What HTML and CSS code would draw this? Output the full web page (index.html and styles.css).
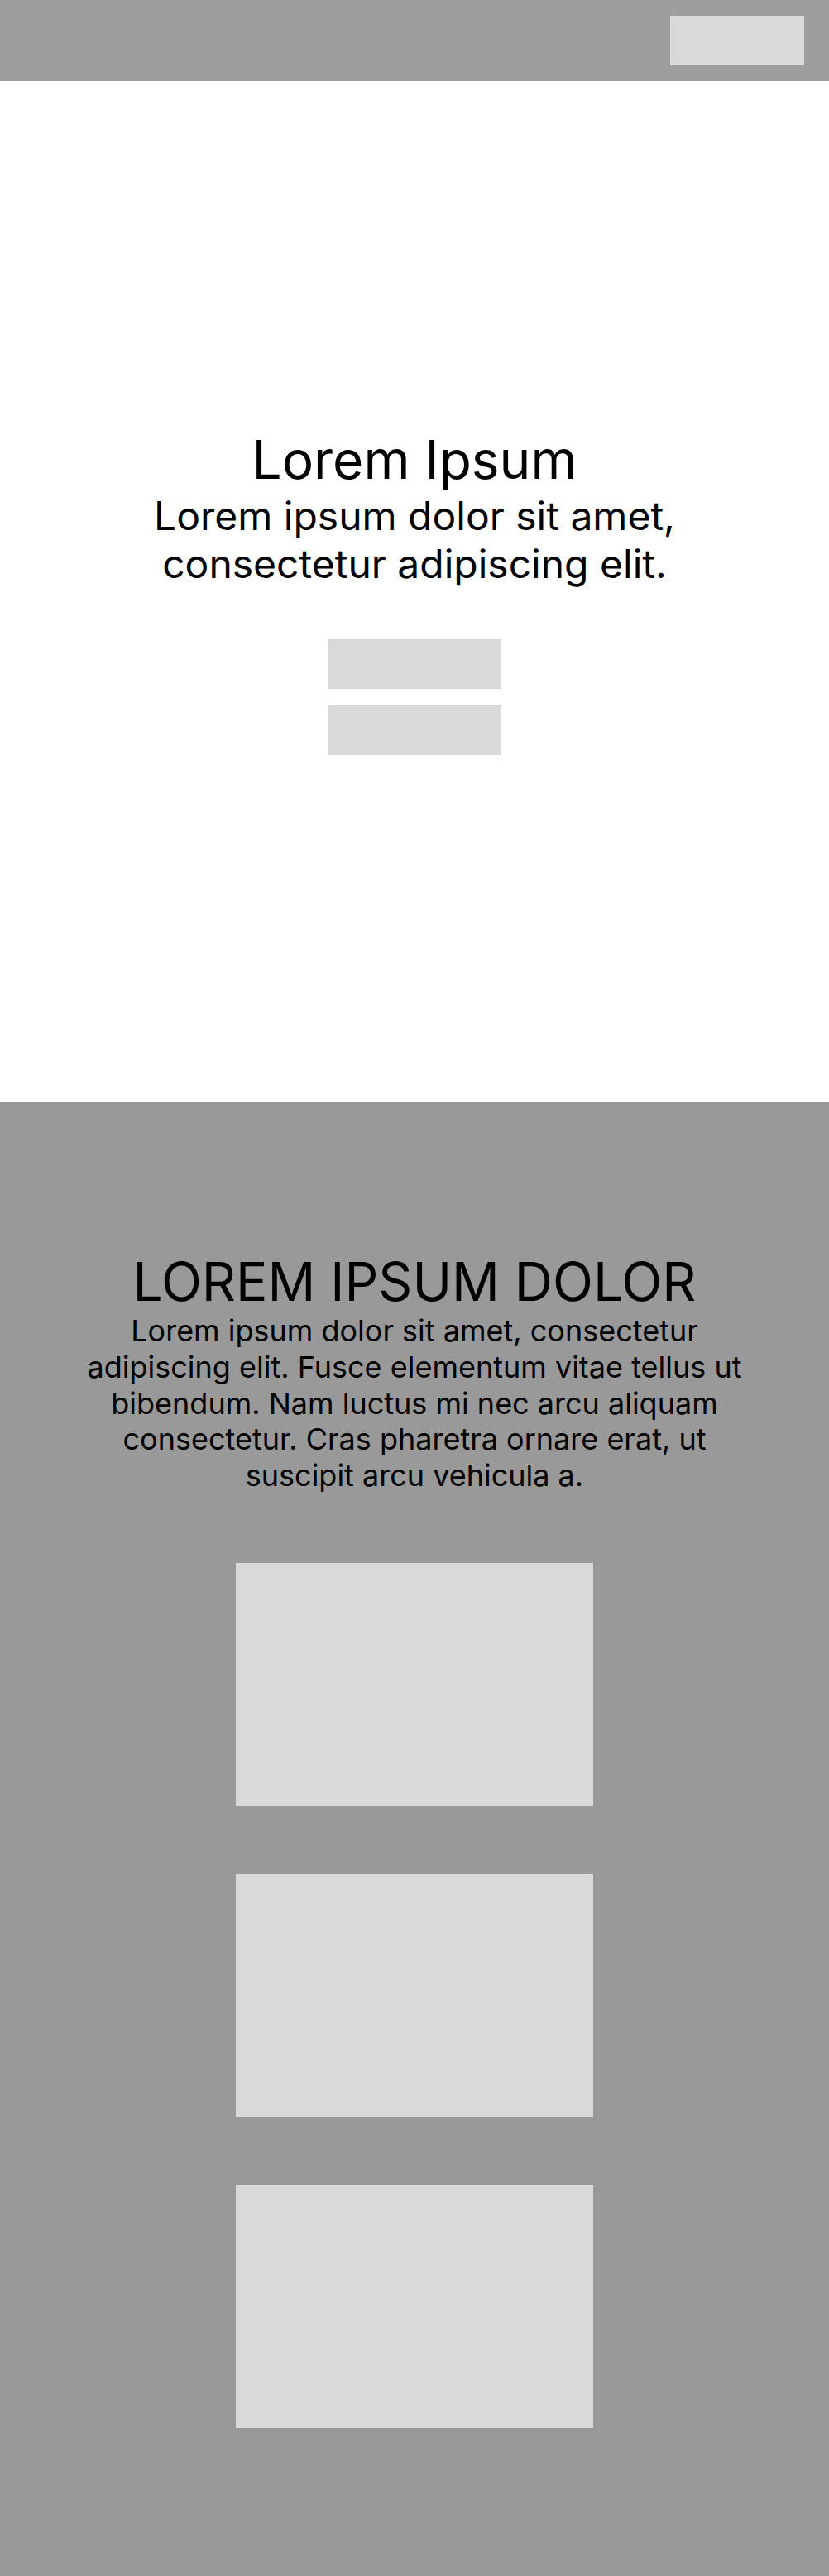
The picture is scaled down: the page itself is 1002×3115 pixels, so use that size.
FILE: index.html
```html
<!DOCTYPE html>
<html lang="en">
<head>
<meta charset="utf-8">
<title>Lorem Ipsum</title>
<link rel="stylesheet" href="styles.css">
</head>
<body>
<header class="topbar">
  <div class="topbar-button"></div>
</header>
<section class="hero">
  <h1 class="hero-title">Lorem Ipsum</h1>
  <p class="hero-subtitle">Lorem ipsum dolor sit amet, consectetur adipiscing elit.</p>
  <div class="hero-actions">
    <div class="hero-button"></div>
    <div class="hero-button"></div>
  </div>
</section>
<section class="features">
  <h2 class="features-title">LOREM IPSUM DOLOR</h2>
  <p class="features-text">Lorem ipsum dolor sit amet, consectetur adipiscing elit. Fusce elementum vitae tellus ut bibendum. Nam luctus mi nec arcu aliquam consectetur. Cras pharetra ornare erat, ut suscipit arcu vehicula a.</p>
  <div class="features-cards">
    <div class="card"></div>
    <div class="card"></div>
    <div class="card"></div>
  </div>
</section>
</body>
</html>
```
FILE: styles.css
```css
* {
  box-sizing: border-box;
}

html, body {
  margin: 0;
  padding: 0;
}

body {
  font-family: Inter, "Noto Sans", sans-serif;
  font-weight: 400;
  color: #000;
  background: #fff;
}

.topbar {
  height: 98px;
  background: #9e9e9e;
  display: flex;
  justify-content: flex-end;
  align-items: center;
  padding: 0 30px;
}

.topbar-button {
  width: 162px;
  height: 60px;
  background: #d9d9d9;
}

.hero {
  height: 1234px;
  display: flex;
  flex-direction: column;
  align-items: center;
  justify-content: center;
  text-align: center;
}

.hero-title {
  margin: 0;
  font-size: 64px;
  font-weight: 400;
  line-height: 1.21;
}

.hero-subtitle {
  margin: 0;
  max-width: 680px;
  font-size: 48px;
  line-height: 1.21;
}

.hero-actions {
  margin-top: 62px;
  display: flex;
  flex-direction: column;
  gap: 20px;
}

.hero-button {
  width: 210px;
  height: 60px;
  background: #d9d9d9;
}

.features {
  background: #999999;
  padding: 179px 0;
  display: flex;
  flex-direction: column;
  align-items: center;
  text-align: center;
}

.features-title {
  margin: 0;
  font-size: 64px;
  font-weight: 400;
  line-height: 1.21;
}

.features-text {
  margin: 0;
  max-width: 800px;
  font-size: 36px;
  line-height: 1.21;
}

.features-cards {
  margin-top: 84px;
  display: flex;
  flex-direction: column;
  gap: 82px;
}

.card {
  width: 432px;
  height: 294px;
  background: #d9d9d9;
}
```
